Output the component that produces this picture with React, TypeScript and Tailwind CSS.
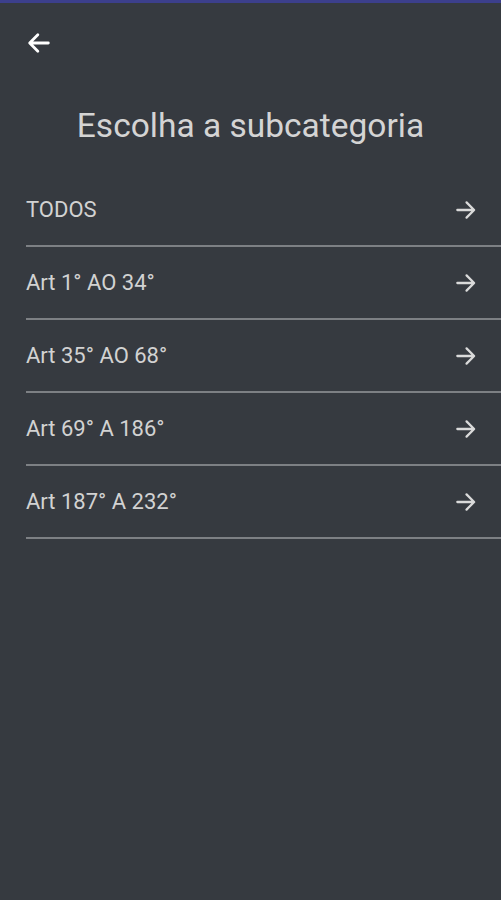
import React from "react";

const items = ["TODOS", "Art 1° AO 34°", "Art 35° AO 68°", "Art 69° A 186°", "Art 187° A 232°"];

function ArrowRight() {
  return (
    <svg width="26" height="26" viewBox="0 0 24 24" fill="none" stroke="#dadada" strokeWidth="2.1" strokeLinecap="round" strokeLinejoin="round">
      <path d="M4 12h15M12.5 5l7 7-7 7" />
    </svg>
  );
}

export default function App() {
  return (
    <div className="w-[501px] h-[900px] bg-[#363a40] flex flex-col" style={{ fontFamily: "Roboto, 'Liberation Sans', sans-serif" }}>
      <div className="h-[3px] bg-[#3c3f8c]" />
      <div className="pl-[25px] pt-[26px] h-[60px]">
        <svg width="28" height="28" viewBox="0 0 24 24" fill="none" stroke="#ffffff" strokeWidth="2.4" strokeLinecap="round" strokeLinejoin="round">
          <path d="M20 12H4.5M11 5l-7 7 7 7" />
        </svg>
      </div>
      <h1 className="text-center text-[33.5px] text-[#d4d4d4] mt-[43px] leading-[40px]">Escolha a subcategoria</h1>
      <div className="ml-[26px] mt-[28px] flex flex-col">
        {items.map((t, i) => (
          <div key={i} className="h-[73px] flex items-center justify-between border-b-2 border-[#7d8084] pr-[22px]">
            <span className="text-[#d2d2d2] text-[22px]">{t}</span>
            <ArrowRight />
          </div>
        ))}
      </div>
    </div>
  );
}
